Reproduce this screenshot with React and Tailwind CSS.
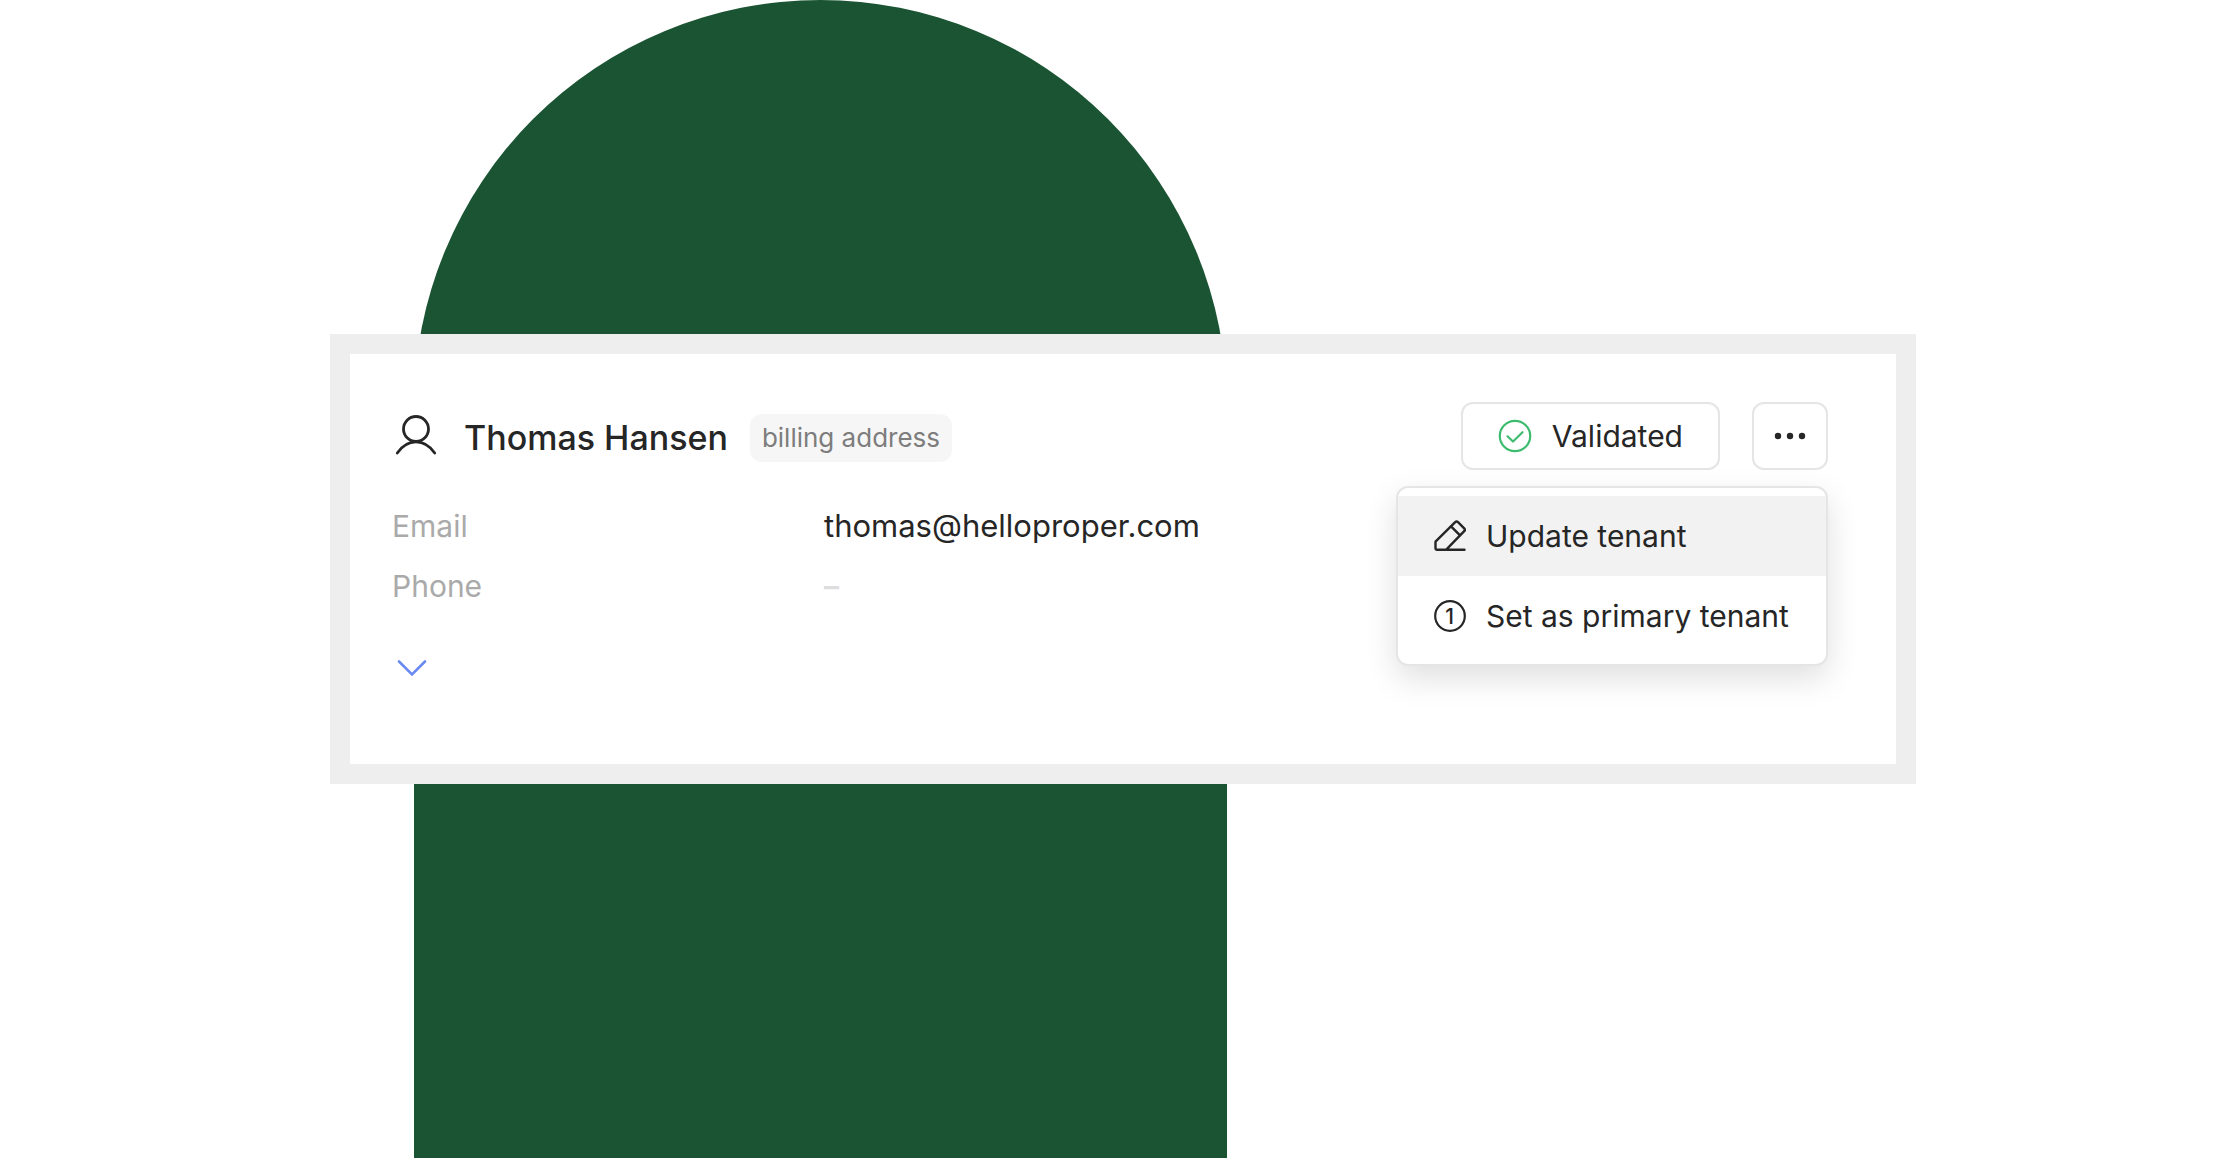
import React, { useState } from "react";

function UserIcon() {
  return (
    <svg viewBox="2 0 48 48" className="size-12 shrink-0" fill="none" stroke="#262626" strokeWidth="2.8" aria-hidden="true">
      <circle cx="26" cy="17" r="12.5" />
      <path d="M7.300 41C12 34 18.500 29.800 26 29.800S40 34 44.700 41" strokeLinecap="round" />
    </svg>
  );
}

function CheckIcon() {
  return (
    <svg viewBox="0 0 34 34" className="size-[34px] shrink-0" fill="none" stroke="#3dbb6e" strokeWidth="2.200" aria-hidden="true">
      <circle cx="17" cy="17" r="15.2" />
      <path d="M9.500 17.300l5.500 5.200 9.500-9.300" strokeLinecap="round" strokeLinejoin="round" />
    </svg>
  );
}

function DotsIcon() {
  return (
    <svg viewBox="0 0 32 8" className="w-8 h-2" fill="#262626" aria-hidden="true">
      <circle cx="4" cy="4" r="3.200" />
      <circle cx="16" cy="4" r="3.200" />
      <circle cx="28" cy="4" r="3.200" />
    </svg>
  );
}

function PencilIcon() {
  return (
    <svg viewBox="0 0 32 32" className="size-8 shrink-0" fill="none" stroke="#262626" strokeWidth="2.400" strokeLinecap="round" strokeLinejoin="round" aria-hidden="true">
      <path d="M12 29.800 30.200 11.200a2 2 0 0 0 0-2.800l-6.200-6.200a2 2 0 0 0-2.800 0L1.500 21.700v6.600a1.500 1.500 0 0 0 1.500 1.500H30.500" />
      <path d="M17 6.400l8.800 8.800" />
    </svg>
  );
}

function PrimaryIcon() {
  return (
    <svg viewBox="0 0 32 32" className="size-8 shrink-0" aria-hidden="true">
      <circle cx="16" cy="16" r="14.800" fill="none" stroke="#262626" strokeWidth="2.200" />
      <text x="15.500" y="23.500" textAnchor="middle" fontSize="21" fontWeight="500" fill="#262626">1</text>
    </svg>
  );
}

const menuItems = [
  { label: "Update tenant", Icon: PencilIcon },
  { label: "Set as primary tenant", Icon: PrimaryIcon },
];

export default function App() {
  const [menuOpen, setMenuOpen] = useState(true);
  const [active, setActive] = useState(0);

  return (
    <main className="grid min-h-screen items-start bg-white text-[30px] leading-[40px] text-[#262626] font-['Inter',sans-serif]">
      {/* arch behind the card */}
      <div className="col-start-1 row-start-1 ml-[414px] w-[813px] h-[1158px] rounded-t-full bg-[#1a5433]" />

      <section className="col-start-1 row-start-1 mt-[334px] ml-[330px] mr-[304px] border-20 border-[#eeeeee] bg-white pt-12 pb-[66px] pl-[42px] pr-[68px]">
        <header className="flex items-center justify-between">
          <div className="flex items-center gap-6">
            <UserIcon />
            <div className="flex items-center gap-[22px] pt-1">
              <h1 className="text-[34px] font-medium">Thomas Hansen</h1>
              <span className="rounded-xl bg-[#f6f6f6] px-3 py-1 text-[26px] text-[#7d7d7d]">billing address</span>
            </div>
          </div>

          <div className="relative flex gap-8">
            <button type="button" className="flex h-[68px] items-center gap-5 rounded-xl border-2 border-[#e5e5e5] px-[35px]">
              <CheckIcon />
              Validated
            </button>
            <button
              type="button"
              aria-label="More actions"
              aria-expanded={menuOpen}
              onClick={() => setMenuOpen(!menuOpen)}
              className="flex h-[68px] w-[76px] items-center justify-center rounded-xl border-2 border-[#e5e5e5]"
            >
              <DotsIcon />
            </button>

            {menuOpen && (
              <div role="menu" className="absolute right-0 top-full mt-4 w-[432px] rounded-xl border-2 border-[#e5e5e5] bg-white py-2 shadow-[0_12px_32px_rgba(0,0,0,0.13)]">
                {menuItems.map(({ label, Icon }, i) => (
                  <button
                    key={label}
                    type="button"
                    role="menuitem"
                    onMouseEnter={() => setActive(i)}
                    className={`flex h-20 w-full items-center gap-5 pl-9 whitespace-nowrap ${i === active ? "bg-[#f2f2f2]" : ""}`}
                  >
                    <Icon />
                    {label}
                  </button>
                ))}
              </div>
            )}
          </div>
        </header>

        <dl className="mt-[26px] grid grid-cols-[432px_1fr] leading-[60px]">
          <dt className="text-[#aaaaaa]">Email</dt>
          <dd className="text-[31px]">thomas@helloproper.com</dd>
          <dt className="text-[#aaaaaa]">Phone</dt>
          <dd className="font-semibold text-[#dddddd]">–</dd>
        </dl>

        <button type="button" aria-label="Show more" className="mt-[22px] flex h-[60px] w-10 items-center justify-center">
          <svg viewBox="0 0 30 18" className="w-[30px] h-[18px]" fill="none" stroke="#6b8af0" strokeWidth="2.600" aria-hidden="true">
            <path d="M2 2.500 15 15.500 28 2.500" strokeLinecap="round" />
          </svg>
        </button>
      </section>
    </main>
  );
}
